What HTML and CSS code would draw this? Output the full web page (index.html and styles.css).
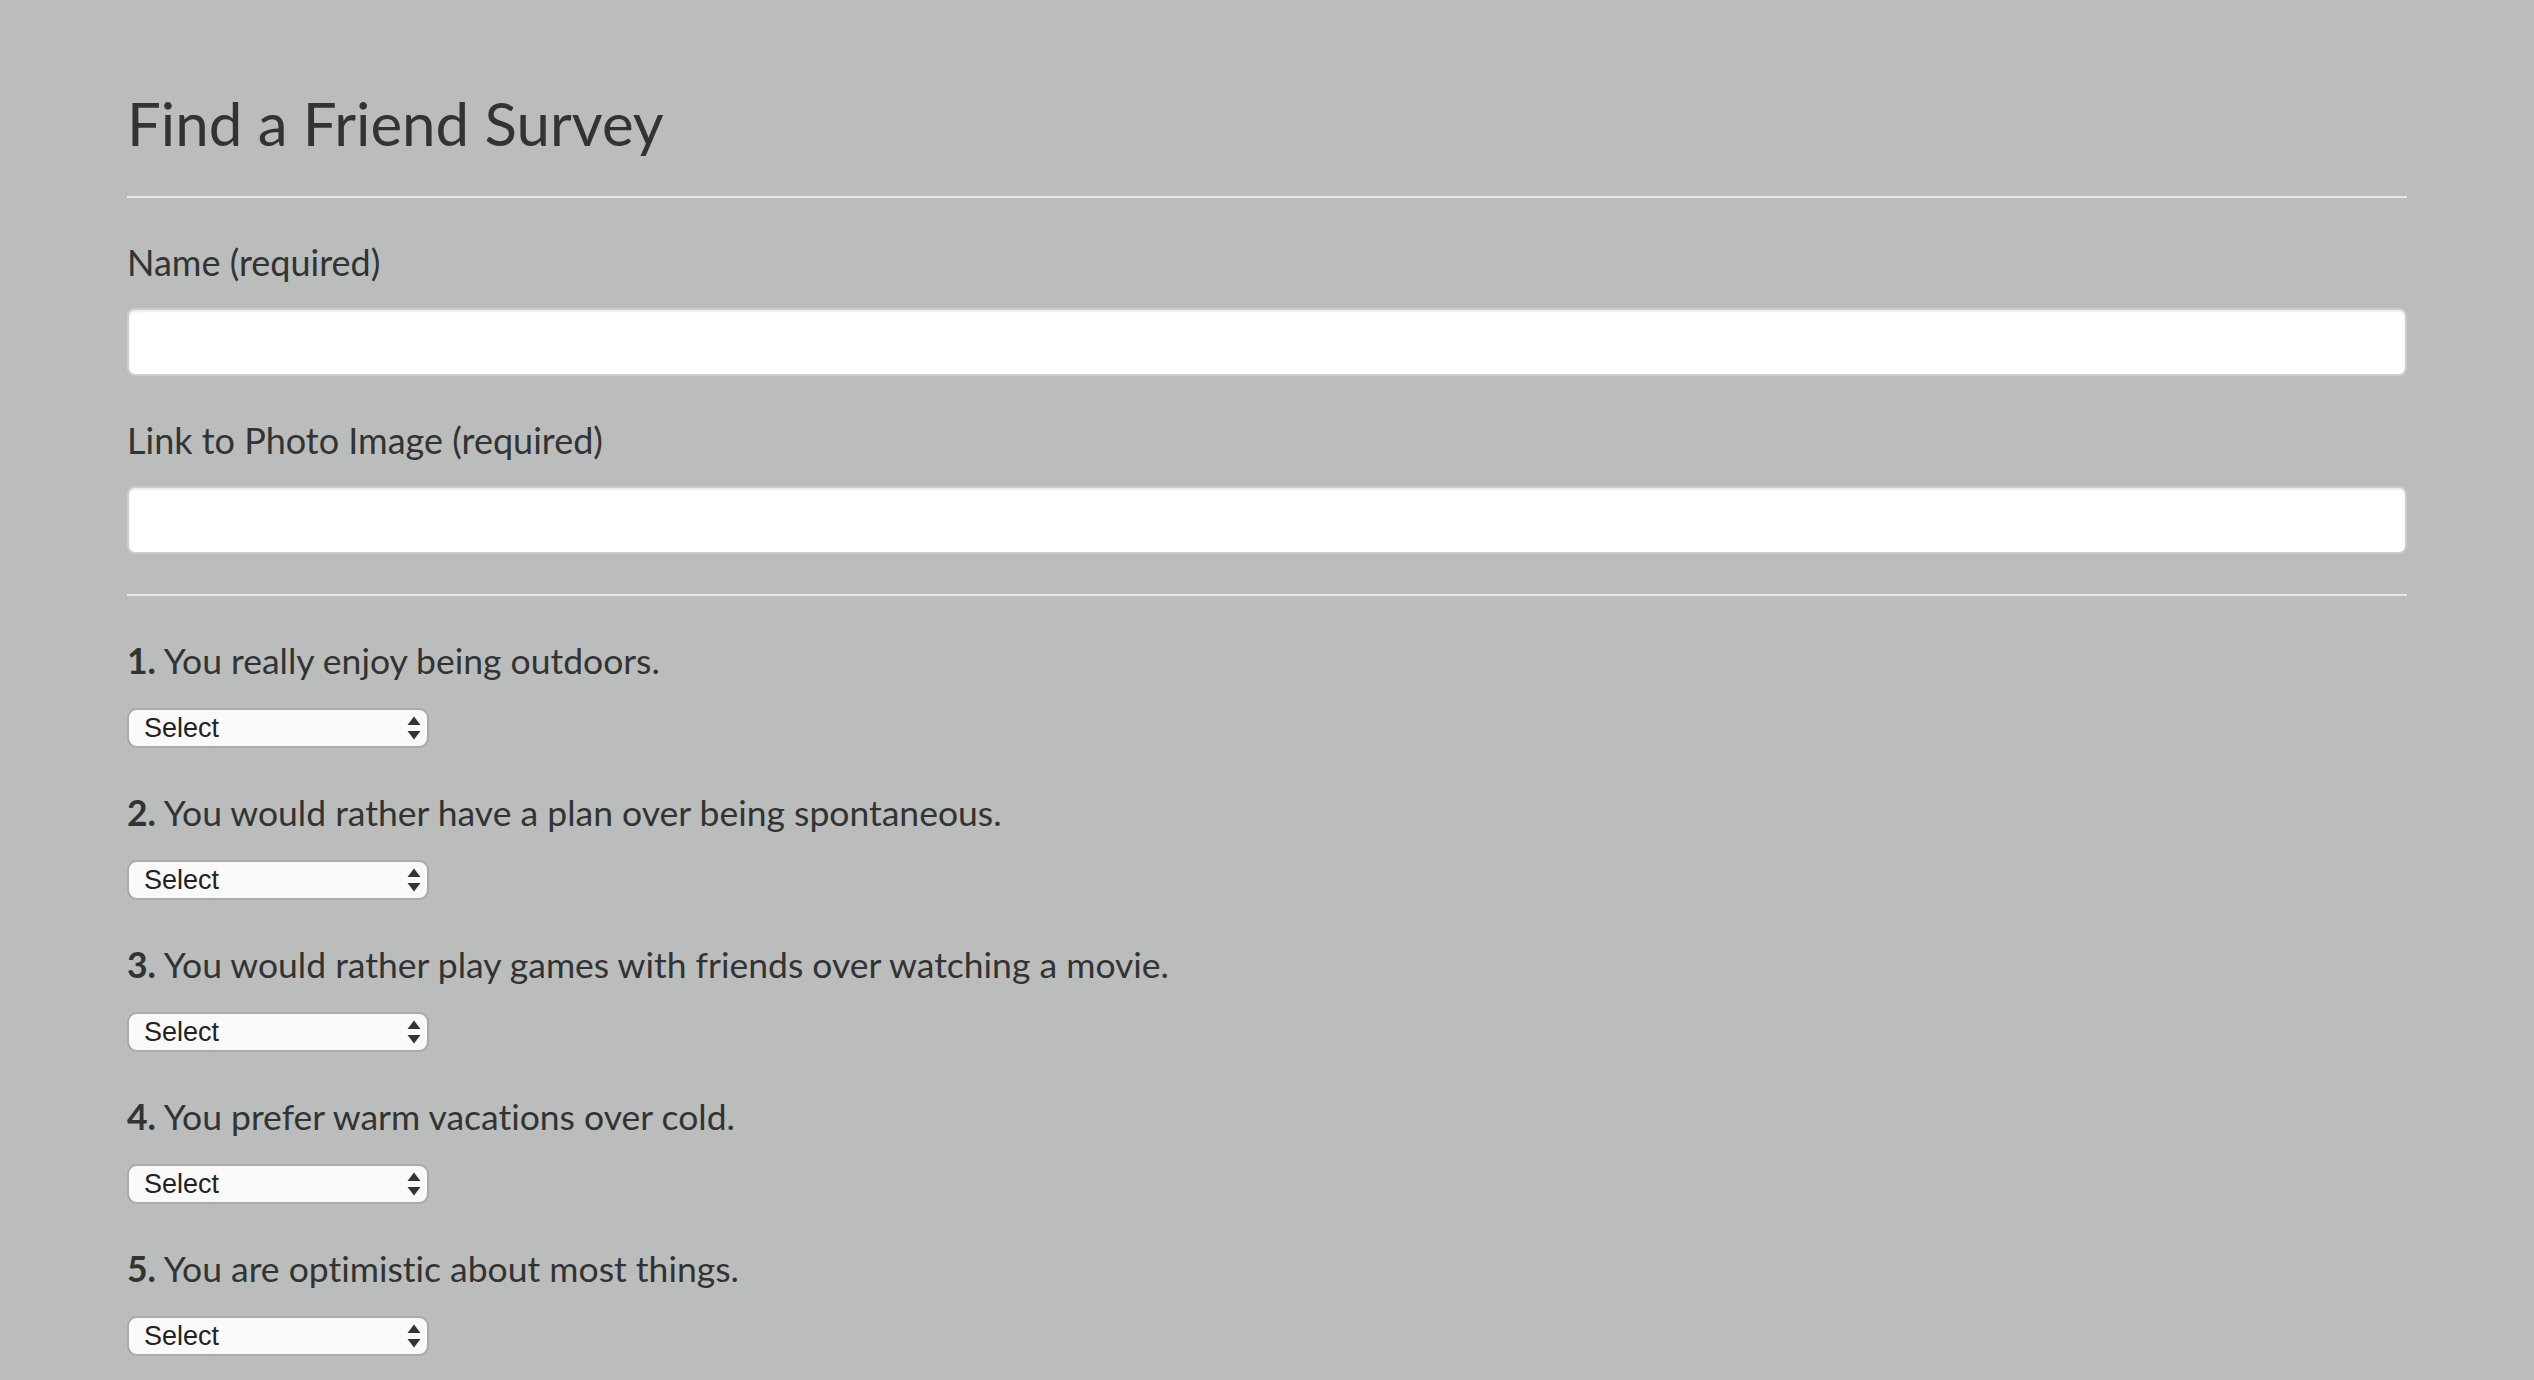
FILE: index.html
```html
<!DOCTYPE html>
<html lang="en">
<head>
<meta charset="utf-8">
<title>Find a Friend Survey</title>
<link rel="stylesheet" href="styles.css">
</head>
<body>
<div class="container">
  <h1 class="title">Find a Friend Survey</h1>
  <hr class="rule">
  <form class="survey">
    <div class="form-group">
      <label class="field-label" for="name">Name (required)</label>
      <input class="text-input" id="name" type="text">
    </div>
    <div class="form-group last">
      <label class="field-label" for="photo">Link to Photo Image (required)</label>
      <input class="text-input" id="photo" type="text">
    </div>
    <hr class="rule">
    <div class="question">
      <p class="q-text"><b class="q-num">1.</b> You really enjoy being outdoors.</p>
      <div class="select-wrap">
        <select class="q-select"><option>Select</option></select>
        <svg class="select-arrows" width="14" height="24" viewBox="0 0 14 24"><path d="M0.5 9 L7 0.5 L13.5 9 Z M0.5 15 L13.5 15 L7 23.5 Z" fill="#333"/></svg>
      </div>
    </div>
    <div class="question">
      <p class="q-text"><b class="q-num">2.</b> You would rather have a plan over being spontaneous.</p>
      <div class="select-wrap">
        <select class="q-select"><option>Select</option></select>
        <svg class="select-arrows" width="14" height="24" viewBox="0 0 14 24"><path d="M0.5 9 L7 0.5 L13.5 9 Z M0.5 15 L13.5 15 L7 23.5 Z" fill="#333"/></svg>
      </div>
    </div>
    <div class="question">
      <p class="q-text"><b class="q-num">3.</b> You would rather play games with friends over watching a movie.</p>
      <div class="select-wrap">
        <select class="q-select"><option>Select</option></select>
        <svg class="select-arrows" width="14" height="24" viewBox="0 0 14 24"><path d="M0.5 9 L7 0.5 L13.5 9 Z M0.5 15 L13.5 15 L7 23.5 Z" fill="#333"/></svg>
      </div>
    </div>
    <div class="question">
      <p class="q-text"><b class="q-num">4.</b> You prefer warm vacations over cold.</p>
      <div class="select-wrap">
        <select class="q-select"><option>Select</option></select>
        <svg class="select-arrows" width="14" height="24" viewBox="0 0 14 24"><path d="M0.5 9 L7 0.5 L13.5 9 Z M0.5 15 L13.5 15 L7 23.5 Z" fill="#333"/></svg>
      </div>
    </div>
    <div class="question">
      <p class="q-text"><b class="q-num">5.</b> You are optimistic about most things.</p>
      <div class="select-wrap">
        <select class="q-select"><option>Select</option></select>
        <svg class="select-arrows" width="14" height="24" viewBox="0 0 14 24"><path d="M0.5 9 L7 0.5 L13.5 9 Z M0.5 15 L13.5 15 L7 23.5 Z" fill="#333"/></svg>
      </div>
    </div>
  </form>
</div>
</body>
</html>
```
FILE: styles.css
```css
html, body {
  margin: 0;
  padding: 0;
}
body {
  background: #babdbc;
  color: #333333;
  font-family: Lato, "Open Sans", sans-serif;
  font-size: 28px;
  font-variant-ligatures: no-common-ligatures;
  font-feature-settings: "liga" 0;
  overflow: hidden;
}
.container {
  width: 2280px;
  margin: 0 auto;
}
.title {
  font-size: 60px;
  font-weight: 400;
  line-height: 66px;
  margin: 90px 0 0;
}
.rule {
  height: 0;
  border: 0;
  border-top: 2px solid #e8e9e9;
  margin: 40px 0;
}
.survey {
  margin: 0;
}
.form-group {
  margin-bottom: 40px;
}
.form-group.last {
  margin-bottom: 0;
}
.field-label {
  display: block;
  font-size: 36px;
  line-height: 48px;
  margin-bottom: 22px;
}
.text-input {
  display: block;
  box-sizing: border-box;
  width: 100%;
  height: 68px;
  margin: 0;
  padding: 12px 24px;
  background: #ffffff;
  border: 2px solid #cccccc;
  border-radius: 8px;
  box-shadow: inset 0 2px 2px rgba(0, 0, 0, 0.075);
  font-family: inherit;
  font-size: 28px;
  outline: none;
}
.question {
  margin-bottom: 40px;
}
.q-text {
  font-size: 35.5px;
  line-height: 50px;
  margin: 0 0 22px;
}
.q-num {
  font-weight: 700;
}
.select-wrap {
  position: relative;
  width: 302px;
  height: 40px;
}
.q-select {
  -webkit-appearance: none;
  appearance: none;
  box-sizing: border-box;
  width: 302px;
  height: 40px;
  margin: 0;
  padding: 0 0 0 15px;
  background: #f9f9f9;
  border: 2px solid #a8a9a9;
  border-radius: 10px;
  color: #222222;
  font-family: "Liberation Sans", Arial, sans-serif;
  font-size: 27px;
  line-height: 36px;
  outline: none;
}
.select-arrows {
  position: absolute;
  left: 280px;
  top: 8px;
  pointer-events: none;
}
```
